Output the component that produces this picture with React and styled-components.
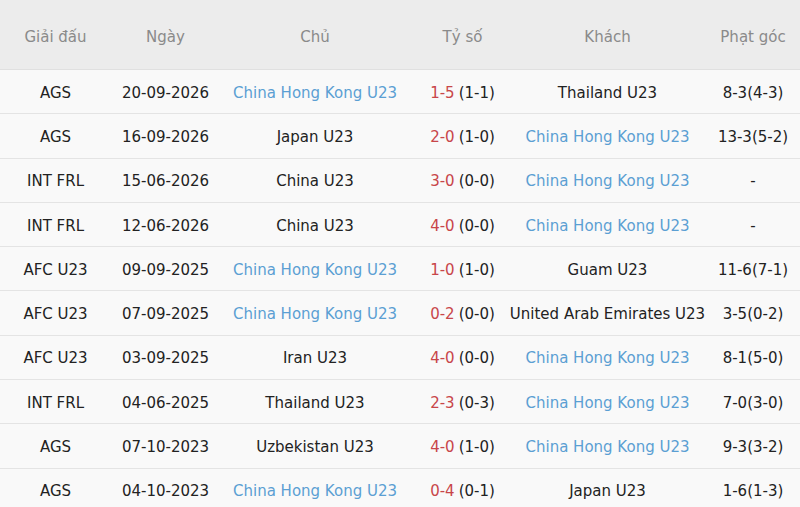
import styled, { createGlobalStyle } from "styled-components";

const GlobalStyle = createGlobalStyle`
  html, body {
    margin: 0;
    padding: 0;
    background: #f9f9f9;
  }
  body {
    font-family: "DejaVu Sans", "Liberation Sans", sans-serif;
  }
`;

const COLS = "111px 109px 190px 105px 185px 100px";

const Table = styled.div`
  width: 800px;
  display: flex;
  flex-direction: column;
`;

const HeadRow = styled.div`
  display: grid;
  grid-template-columns: ${COLS};
  height: 70px;
  background: #ececec;
  border-bottom: 1px solid #e0e0e0;
  box-sizing: border-box;
`;

const HeadCell = styled.div`
  display: flex;
  align-items: center;
  justify-content: center;
  padding-top: 4px;
  padding-left: ${(p) => (p.$last ? "6px" : "0")};
  color: #8a8a8a;
  font-size: 15px;
`;

const Row = styled.div`
  display: grid;
  grid-template-columns: ${COLS};
  height: 44.3px;
  background: #f9f9f9;
  border-bottom: 1px solid #e4e4e4;
  box-sizing: border-box;
`;

const Cell = styled.div`
  display: flex;
  align-items: center;
  justify-content: center;
  padding-top: 2px;
  padding-left: ${(p) => (p.$last ? "6px" : "0")};
  white-space: nowrap;
  font-size: 15px;
  color: ${(p) => (p.$team ? "#5b9fd3" : "#222")};
`;

const Score = styled.span`
  color: #c8464a;
  margin-right: 4px;
`;

const TEAM = "China Hong Kong U23";

const rows = [
  ["AGS", "20-09-2026", TEAM, "1-5", "(1-1)", "Thailand U23", "8-3(4-3)"],
  ["AGS", "16-09-2026", "Japan U23", "2-0", "(1-0)", TEAM, "13-3(5-2)"],
  ["INT FRL", "15-06-2026", "China U23", "3-0", "(0-0)", TEAM, "-"],
  ["INT FRL", "12-06-2026", "China U23", "4-0", "(0-0)", TEAM, "-"],
  ["AFC U23", "09-09-2025", TEAM, "1-0", "(1-0)", "Guam U23", "11-6(7-1)"],
  ["AFC U23", "07-09-2025", TEAM, "0-2", "(0-0)", "United Arab Emirates U23", "3-5(0-2)"],
  ["AFC U23", "03-09-2025", "Iran U23", "4-0", "(0-0)", TEAM, "8-1(5-0)"],
  ["INT FRL", "04-06-2025", "Thailand U23", "2-3", "(0-3)", TEAM, "7-0(3-0)"],
  ["AGS", "07-10-2023", "Uzbekistan U23", "4-0", "(1-0)", TEAM, "9-3(3-2)"],
  ["AGS", "04-10-2023", TEAM, "0-4", "(0-1)", "Japan U23", "1-6(1-3)"],
];

const headers = ["Giải đấu", "Ngày", "Chủ", "Tỷ số", "Khách", "Phạt góc"];

export default function App() {
  return (
    <>
      <GlobalStyle />
      <Table>
        <HeadRow>
          {headers.map((h, i) => (
            <HeadCell key={h} $last={i === headers.length - 1}>
              {h}
            </HeadCell>
          ))}
        </HeadRow>
        {rows.map((r, i) => (
          <Row key={i}>
            <Cell>{r[0]}</Cell>
            <Cell>{r[1]}</Cell>
            <Cell $team={r[2] === TEAM}>{r[2]}</Cell>
            <Cell>
              <Score>{r[3]}</Score>
              {r[4]}
            </Cell>
            <Cell $team={r[5] === TEAM}>{r[5]}</Cell>
            <Cell $last>{r[6]}</Cell>
          </Row>
        ))}
      </Table>
    </>
  );
}
